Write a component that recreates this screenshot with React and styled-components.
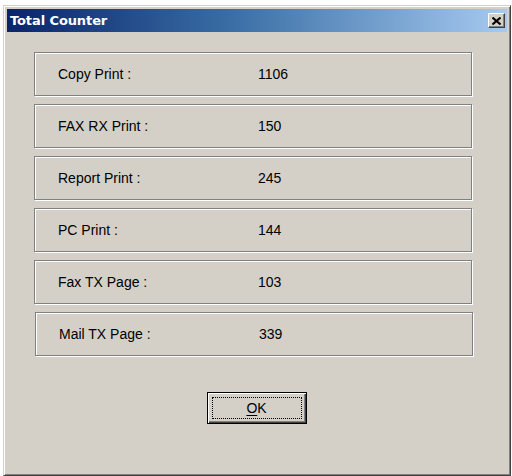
import React from "react";
import styled, { createGlobalStyle } from "styled-components";

const Global = createGlobalStyle`
  html, body { margin: 0; padding: 0; background: #ffffff; }
  body { width: 512px; height: 476px; overflow: hidden; font-family: "Liberation Sans", Arial, sans-serif; }
`;

const Page = styled.div`
  padding: 5px 0 0 3px;
  width: 512px;
  height: 476px;
  box-sizing: border-box;
`;

const Window = styled.div`
  width: 508px;
  height: 471px;
  box-sizing: border-box;
  background: #d4d0c8;
  border-top: 1px solid #d4d0c8;
  border-left: 1px solid #d4d0c8;
  border-right: 1px solid #404040;
  border-bottom: 1px solid #404040;
  box-shadow: inset 1px 1px #ffffff, inset -1px -1px #808080;
  padding: 3px;
  display: flex;
  flex-direction: column;
`;

const TitleBar = styled.div`
  height: 23px;
  flex: none;
  background: linear-gradient(to right, #0a246a 0%, #3a6ea5 45%, #a6caf0 100%);
  display: flex;
  align-items: center;
  justify-content: space-between;
  padding: 0 2px 0 3px;
`;

const Title = styled.span`
  color: #ffffff;
  font-family: "DejaVu Sans", Tahoma, sans-serif;
  font-weight: bold;
  font-size: 13px;
  letter-spacing: -0.1px;
`;

const CloseButton = styled.div`
  width: 17px;
  height: 15px;
  box-sizing: border-box;
  background: #d4d0c8;
  border-top: 1px solid #ffffff;
  border-left: 1px solid #ffffff;
  border-right: 1px solid #404040;
  border-bottom: 1px solid #404040;
  box-shadow: inset -1px -1px #808080;
  display: flex;
  align-items: center;
  justify-content: center;
`;

const Body = styled.div`
  flex: 1;
  display: flex;
  flex-direction: column;
  padding: 20px 0 0 27px;
`;

const List = styled.div`
  display: flex;
  flex-direction: column;
  gap: 8px;
`;

const Row = styled.div`
  width: 438px;
  height: 44px;
  box-sizing: border-box;
  margin-left: ${(p) => p.$shift || 0}px;
  border: 1px solid #808080;
  box-shadow: inset 1px 1px #ffffff, 1px 1px #ffffff;
  display: flex;
  align-items: center;
  padding-left: 23px;
  font-size: 14px;
  color: #000;
`;

const Label = styled.span`
  width: 200px;
  flex: none;
`;

const Value = styled.span``;

const Footer = styled.div`
  display: flex;
  justify-content: center;
  padding-top: 36px;
  padding-right: 28px;
`;

const OkButton = styled.div`
  width: 100px;
  height: 32px;
  box-sizing: border-box;
  border: 1px solid #000;
  background: #d4d0c8;
  box-shadow: inset 1px 1px #ffffff, inset -1px -1px #404040, inset -2px -2px #808080;
  padding: 4px;
  display: flex;
`;

const Focus = styled.div`
  flex: 1;
  border: 1px dotted #000;
  display: flex;
  align-items: center;
  justify-content: center;
  font-size: 14px;
  color: #000;
`;

const Accel = styled.span`
  text-decoration: underline;
  text-underline-offset: 2px;
`;

const rows = [
  ["Copy Print :", "1106"],
  ["FAX RX Print :", "150"],
  ["Report Print :", "245"],
  ["PC Print :", "144"],
  ["Fax TX Page :", "103"],
  ["Mail TX Page :", "339", 1],
];

export default function App() {
  return (
    <>
      <Global />
      <Page>
        <Window>
          <TitleBar>
            <Title>Total Counter</Title>
            <CloseButton>
              <svg width="9" height="8" viewBox="0 0 9 8">
                <path d="M0.5 0.5 L8.5 7.5 M8.5 0.5 L0.5 7.5" stroke="#000" strokeWidth="2" />
              </svg>
            </CloseButton>
          </TitleBar>
          <Body>
            <List>
              {rows.map(([l, v, s]) => (
                <Row key={l} $shift={s}>
                  <Label>{l}</Label>
                  <Value>{v}</Value>
                </Row>
              ))}
            </List>
            <Footer>
              <OkButton>
                <Focus>
                  <span>
                    <Accel>O</Accel>K
                  </span>
                </Focus>
              </OkButton>
            </Footer>
          </Body>
        </Window>
      </Page>
    </>
  );
}
